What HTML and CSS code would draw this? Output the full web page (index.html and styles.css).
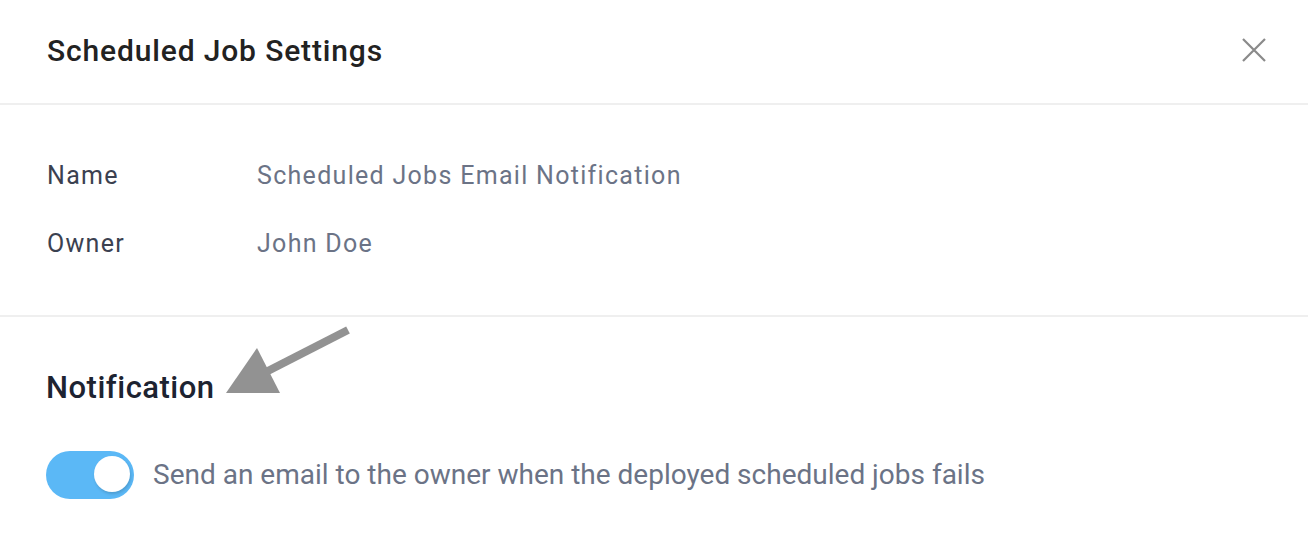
FILE: index.html
```html
<!DOCTYPE html>
<html>
<head>
<meta charset="utf-8">
<link rel="stylesheet" href="styles.css">
</head>
<body>
<div class="modal">
  <header class="modal-header">
    <h1 class="title">Scheduled Job Settings</h1>
    <button class="close" aria-label="Close">
      <svg width="24" height="24" viewBox="0 0 24 24"><path d="M1 1 L23 23 M23 1 L1 23" stroke="#8a8a8a" stroke-width="2.2" fill="none"/></svg>
    </button>
  </header>
  <section class="info">
    <div class="row"><span class="label">Name</span><span class="value">Scheduled Jobs Email Notification</span></div>
    <div class="row"><span class="label">Owner</span><span class="value">John Doe</span></div>
  </section>
  <section class="notif">
    <h2 class="notif-title">Notification</h2>
    <div class="toggle-row">
      <span class="toggle"><span class="knob"></span></span>
      <span class="toggle-text">Send an email to the owner when the deployed scheduled jobs fails</span>
    </div>
    <svg class="arrow" width="140" height="80" viewBox="220 320 140 80">
      <line x1="348" y1="330" x2="262" y2="374" stroke="#929292" stroke-width="8"/>
      <polygon points="226,393 257,348 280,393" fill="#929292"/>
    </svg>
  </section>
</div>
</body>
</html>
```
FILE: styles.css
```css
* { box-sizing: border-box; }
html, body { margin: 0; padding: 0; background: #fff; }
body { font-family: Roboto, "Noto Sans", sans-serif; width: 1308px; height: 542px; overflow: hidden; }
.modal { position: relative; }
.modal-header {
  height: 105px;
  border-bottom: 2px solid #efefef;
  display: flex;
  align-items: flex-start;
  justify-content: space-between;
  padding: 33px 42px 0 47px;
}
.title { margin: 0; font-size: 30px; line-height: 36px; font-weight: 500; color: #222; letter-spacing: 0.85px; }
.close { background: none; border: none; padding: 0; width: 24px; height: 24px; display: flex; margin-top: 5px; }
.info {
  height: 212px;
  border-bottom: 2px solid #efefef;
  padding: 56px 47px 0;
}
.row { display: flex; height: 68px; align-items: flex-start; font-size: 25px; line-height: 30px; letter-spacing: 1.3px; }
.label { width: 210px; color: #3b4150; }
.value { color: #6b7386; }
.notif { padding: 53px 46px 0; }
.notif-title { margin: 0; font-size: 31px; font-weight: 500; color: #1d2331; line-height: 36px; letter-spacing: 0.5px; }
.toggle-row { display: flex; align-items: center; margin-top: 45px; gap: 19px; }
.toggle {
  width: 88px; height: 48px; border-radius: 24px; background: #5bb8f6;
  position: relative; flex: none;
}
.knob {
  position: absolute; right: 4px; top: 5px; width: 36px; height: 36px; border-radius: 50%;
  background: #fff; box-shadow: 1px 2px 3px rgba(0,0,0,0.15);
}
.toggle-text { font-size: 28px; color: #6b7386; margin-top: -2px; }
.arrow { position: absolute; left: 220px; top: 320px; }
```
